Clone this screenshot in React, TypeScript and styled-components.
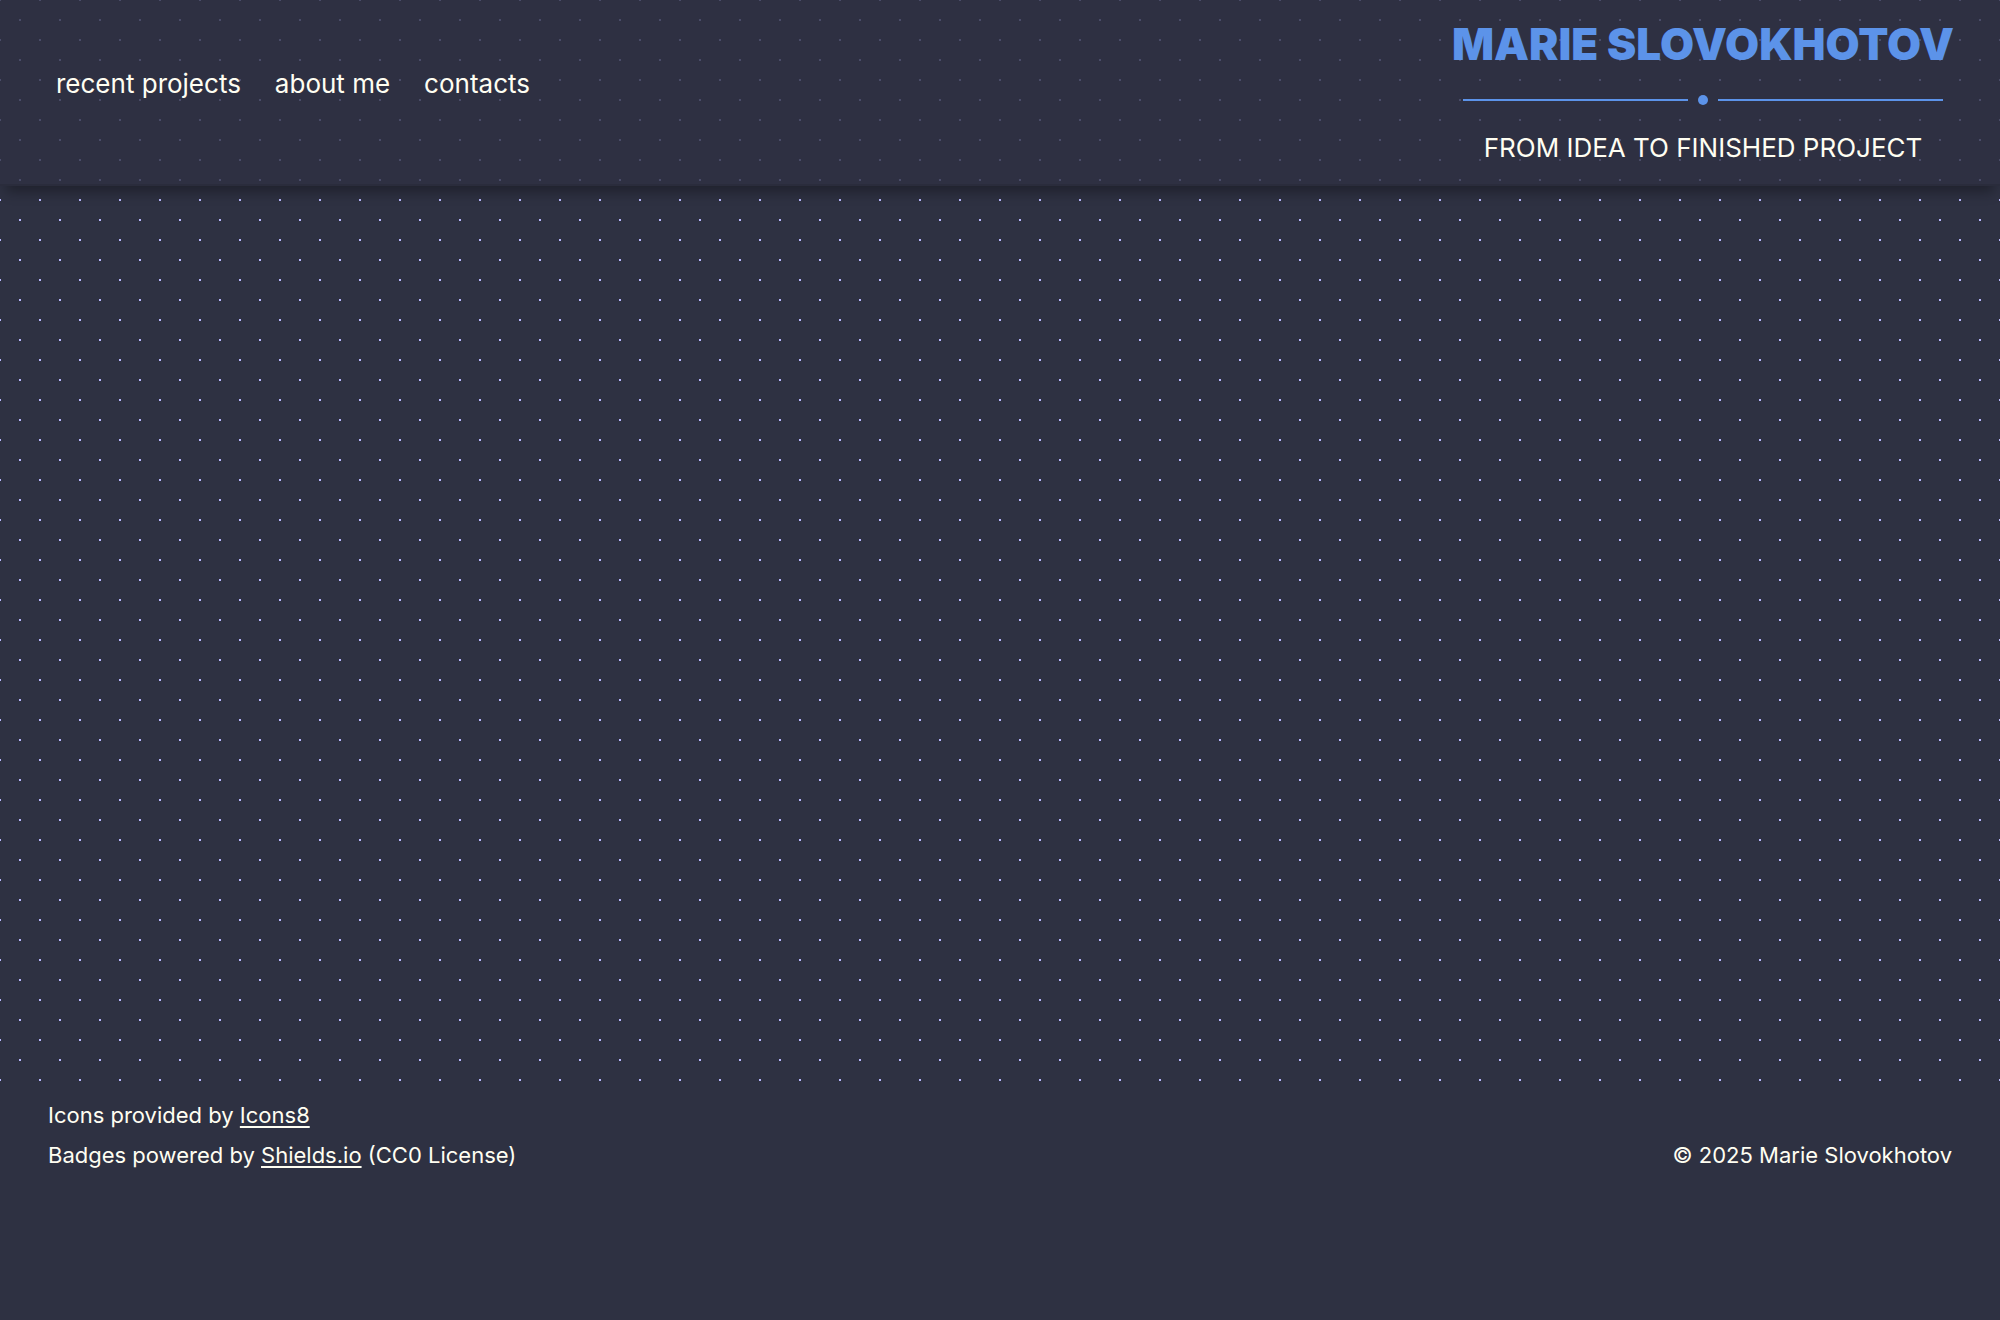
import React from "react";
import styled, { createGlobalStyle } from "styled-components";

const GlobalStyle = createGlobalStyle`
  *, *::before, *::after { box-sizing: border-box; }
  body {
    margin: 0;
    background: #2e3142;
    color: #fffef2;
    font-family: Inter, "Liberation Sans", sans-serif;
  }
`;

const Page = styled.div`
  min-height: 100vh;
  display: flex;
  flex-direction: column;
  background-color: #2e3142;
  background-image: radial-gradient(circle, #bab8ff 1px, rgba(186, 184, 255, 0) 1px),
    radial-gradient(circle, #bab8ff 1px, rgba(186, 184, 255, 0) 1px);
  background-size: 40px 40px;
  background-position: 0 0, 20px 20px;
`;

const Header = styled.header`
  display: flex;
  justify-content: space-between;
  align-items: center;
  padding: 16px 46px 16px 56px;
  background: rgba(46, 49, 66, 0.8);
  border-bottom: 2px solid rgba(0, 0, 0, 0.08);
  box-shadow: 0 12px 12px -6px rgba(0, 0, 0, 0.32);
`;

const Nav = styled.nav`
  display: flex;
  gap: 34px;
  padding-bottom: 16px;
`;

const NavLink = styled.a`
  color: inherit;
  font-size: 26px;
  line-height: 32px;
  text-decoration: none;
`;

const Brand = styled.div`
  display: flex;
  flex-direction: column;
  align-items: center;
  gap: 24px;
`;

const Name = styled.h1`
  margin: 0;
  color: #5c93e9;
  font-size: 44px;
  font-weight: 900;
  line-height: 56px;
  text-transform: uppercase;
`;

const Divider = styled.div`
  display: flex;
  align-items: center;
  gap: 10px;
  width: 480px;
  height: 8px;
`;

const Line = styled.span`
  flex: 1;
  height: 2px;
  background: #5c93e9;
`;

const Dot = styled.span`
  width: 10px;
  height: 10px;
  border-radius: 50%;
  background: #5c93e9;
`;

const Tagline = styled.p`
  margin: 0;
  font-size: 26px;
  line-height: 40px;
  text-transform: uppercase;
`;

const Main = styled.main`
  flex: 1;
`;

const Footer = styled.footer`
  display: flex;
  justify-content: space-between;
  align-items: flex-end;
  padding: 13px 48px 145px;
  background: #2e3142;
  font-size: 22px;
  line-height: 40px;
`;

const Text = styled.p`
  margin: 0;
`;

const CreditLink = styled.a`
  color: inherit;
  text-decoration: underline;
  text-decoration-thickness: 2px;
  text-underline-offset: 3px;
`;

export default function App() {
  return (
    <>
      <GlobalStyle />
      <Page>
        <Header>
          <Nav aria-label="Main">
            <NavLink href="#projects">recent projects</NavLink>
            <NavLink href="#about">about me</NavLink>
            <NavLink href="#contacts">contacts</NavLink>
          </Nav>
          <Brand>
            <Name>Marie Slovokhotov</Name>
            <Divider aria-hidden="true">
              <Line />
              <Dot />
              <Line />
            </Divider>
            <Tagline>From idea to finished project</Tagline>
          </Brand>
        </Header>
        <Main />
        <Footer>
          <div>
            <Text>
              Icons provided by <CreditLink href="#icons8">Icons8</CreditLink>
            </Text>
            <Text>
              Badges powered by <CreditLink href="#shields">Shields.io</CreditLink> (CC0 License)
            </Text>
          </div>
          <Text>© 2025 Marie Slovokhotov</Text>
        </Footer>
      </Page>
    </>
  );
}
